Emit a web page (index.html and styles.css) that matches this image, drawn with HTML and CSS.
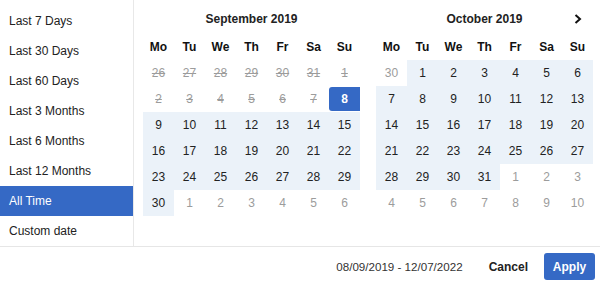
FILE: index.html
```html
<!DOCTYPE html>
<html>
<head>
<meta charset="utf-8">
<link rel="stylesheet" href="styles.css">
</head>
<body>
<div class="picker">
  <div class="main">
    <ul class="ranges">
      <li>Last 7 Days</li>
      <li>Last 30 Days</li>
      <li>Last 60 Days</li>
      <li>Last 3 Months</li>
      <li>Last 6 Months</li>
      <li>Last 12 Months</li>
      <li class="active">All Time</li>
      <li>Custom date</li>
    </ul>
    <div class="calendars">
      <div class="cal">
        <div class="cal-head"><span class="title">September 2019</span></div>
        <div class="grid">
          <span class="wd">Mo</span><span class="wd">Tu</span><span class="wd">We</span><span class="wd">Th</span><span class="wd">Fr</span><span class="wd">Sa</span><span class="wd">Su</span>
          <span class="d dis">26</span><span class="d dis">27</span><span class="d dis">28</span><span class="d dis">29</span><span class="d dis">30</span><span class="d dis">31</span><span class="d dis">1</span>
          <span class="d dis">2</span><span class="d dis">3</span><span class="d dis">4</span><span class="d dis">5</span><span class="d dis">6</span><span class="d dis">7</span><span class="d start">8</span>
          <span class="d in">9</span><span class="d in">10</span><span class="d in">11</span><span class="d in">12</span><span class="d in">13</span><span class="d in">14</span><span class="d in">15</span>
          <span class="d in">16</span><span class="d in">17</span><span class="d in">18</span><span class="d in">19</span><span class="d in">20</span><span class="d in">21</span><span class="d in">22</span>
          <span class="d in">23</span><span class="d in">24</span><span class="d in">25</span><span class="d in">26</span><span class="d in">27</span><span class="d in">28</span><span class="d in">29</span>
          <span class="d in">30</span><span class="d off">1</span><span class="d off">2</span><span class="d off">3</span><span class="d off">4</span><span class="d off">5</span><span class="d off">6</span>
        </div>
      </div>
      <div class="cal">
        <div class="cal-head">
          <span class="title">October 2019</span>
          <span class="next"><svg width="8" height="10" viewBox="0 0 8 10"><path d="M1.5 1 L6 5 L1.5 9" fill="none" stroke="#111" stroke-width="2"/></svg></span>
        </div>
        <div class="grid">
          <span class="wd">Mo</span><span class="wd">Tu</span><span class="wd">We</span><span class="wd">Th</span><span class="wd">Fr</span><span class="wd">Sa</span><span class="wd">Su</span>
          <span class="d off">30</span><span class="d in">1</span><span class="d in">2</span><span class="d in">3</span><span class="d in">4</span><span class="d in">5</span><span class="d in">6</span>
          <span class="d in">7</span><span class="d in">8</span><span class="d in">9</span><span class="d in">10</span><span class="d in">11</span><span class="d in">12</span><span class="d in">13</span>
          <span class="d in">14</span><span class="d in">15</span><span class="d in">16</span><span class="d in">17</span><span class="d in">18</span><span class="d in">19</span><span class="d in">20</span>
          <span class="d in">21</span><span class="d in">22</span><span class="d in">23</span><span class="d in">24</span><span class="d in">25</span><span class="d in">26</span><span class="d in">27</span>
          <span class="d in">28</span><span class="d in">29</span><span class="d in">30</span><span class="d in">31</span><span class="d off">1</span><span class="d off">2</span><span class="d off">3</span>
          <span class="d off">4</span><span class="d off">5</span><span class="d off">6</span><span class="d off">7</span><span class="d off">8</span><span class="d off">9</span><span class="d off">10</span>
        </div>
      </div>
    </div>
  </div>
  <div class="footer">
    <span class="range-text">08/09/2019 - 12/07/2022</span>
    <button class="btn cancel">Cancel</button>
    <button class="btn apply">Apply</button>
  </div>
</div>
</body>
</html>
```

FILE: styles.css
```css
html, body {
  margin: 0;
  padding: 0;
  background: #fff;
}
body {
  font-family: "Liberation Sans", Arial, sans-serif;
  font-size: 12px;
  color: #222;
}
.picker {
  width: 600px;
  height: 286px;
  display: flex;
  flex-direction: column;
}
.main {
  display: flex;
  height: 246px;
  border-bottom: 1px solid #e6e6e6;
}
.ranges {
  list-style: none;
  margin: 0;
  padding: 6px 0 0 0;
  width: 133px;
  border-right: 1px solid #e8e8e8;
}
.ranges li {
  height: 30px;
  line-height: 30px;
  padding-left: 9px;
  color: #222;
}
.ranges li.active {
  background: #3569c5;
  color: #fff;
}
.calendars {
  display: flex;
  gap: 16px;
  padding-left: 9px;
}
.cal {
  width: 217px;
}
.cal-head {
  position: relative;
  height: 30px;
  padding-top: 4px;
  line-height: 30px;
  text-align: center;
}
.title {
  font-weight: bold;
}
.next {
  position: absolute;
  right: 11px;
  top: 14px;
  line-height: 0;
}
.grid {
  display: grid;
  grid-template-columns: repeat(7, 31px);
  grid-auto-rows: 26px;
}
.grid span {
  display: flex;
  align-items: center;
  justify-content: center;
}
.wd {
  font-weight: bold;
  color: #111;
}
.d.in {
  background: #ebf2f9;
}
.d.off {
  color: #9c9c9c;
}
.d.dis {
  color: #9c9c9c;
  text-decoration: line-through;
}
.d.start {
  background: #3569c5;
  color: #fff;
  font-weight: bold;
  border-radius: 3px 0 0 3px;
  margin-top: 1px;
  margin-bottom: 1px;
}
.footer {
  flex: 1;
  display: flex;
  align-items: center;
  justify-content: flex-end;
  padding-right: 5px;
}
.range-text {
  color: #333;
  font-size: 11.6px;
  margin-right: 20px;
}
.btn {
  font-family: "Liberation Sans", Arial, sans-serif;
  font-size: 12px;
  font-weight: bold;
  border: none;
  background: none;
  cursor: pointer;
}
.cancel {
  color: #222;
  padding: 0 6px;
  margin-right: 10px;
}
.apply {
  background: #3569c5;
  color: #fff;
  width: 51px;
  height: 27px;
  border-radius: 3px;
  padding: 0;
}
```
